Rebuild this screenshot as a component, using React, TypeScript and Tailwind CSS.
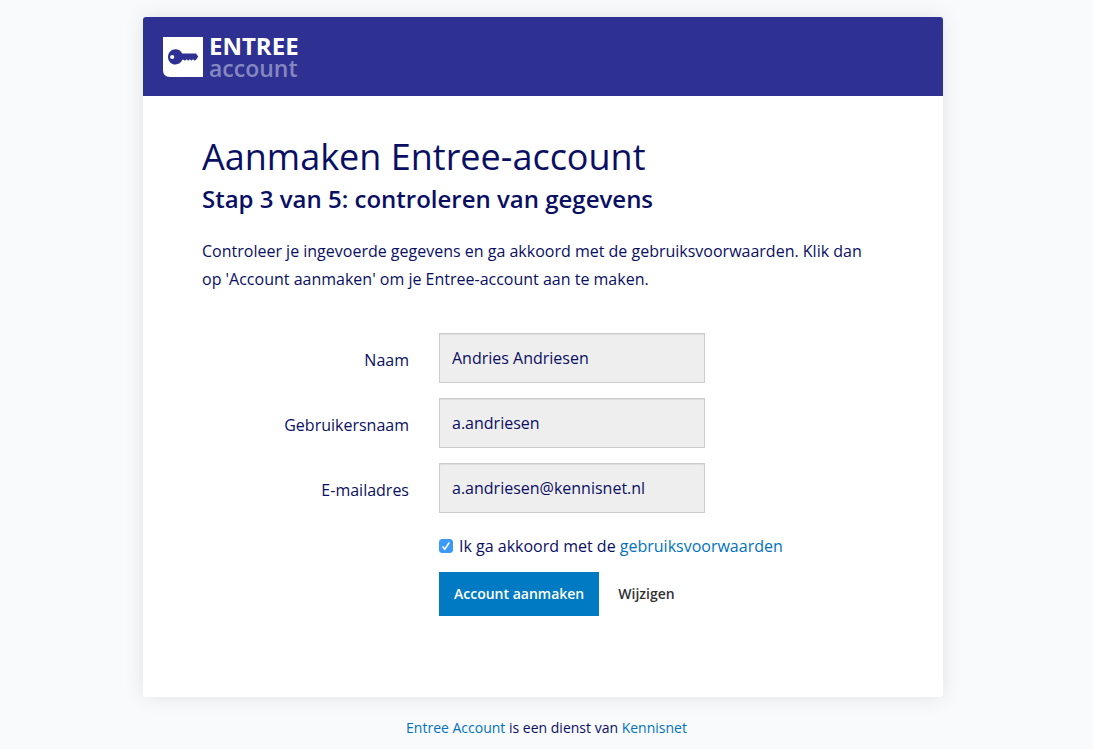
import React, { useState } from 'react';

interface Field {
  id: string;
  label: string;
  value: string;
}

const fields: Field[] = [
  { id: 'naam', label: 'Naam', value: 'Andries Andriesen' },
  { id: 'gebruikersnaam', label: 'Gebruikersnaam', value: 'a.andriesen' },
  { id: 'email', label: 'E-mailadres', value: 'a.andriesen@kennisnet.nl' }
];

const Logo: React.FC = () => (
  <a href="#" className="flex items-center gap-1.5">
    <svg viewBox="0 0 40 40" className="w-10 h-10" aria-hidden="true">
      <path d="M0 0H40V40H7Q0 40 0 33Z" fill="#fff" />
      <path
        fillRule="evenodd"
        fill="#2e3192"
        d="M12.5 12.200C15.500 12.200 18 13.800 19.200 16.400H33L35.200 19.400L33.500 22.300L31.800 23.800L30 22.300L28.500 23.800L26.800 22.300L25.200 23.800L23.600 22.300L22 23.800L20.500 22.800H19.300C18.200 25.600 15.600 27.500 12.500 27.500C8.300 27.500 5 24.100 5 19.900C5 15.600 8.300 12.200 12.500 12.200ZM9.200 17.900A2.100 2.100 0 1 0 9.200 22.100A2.100 2.100 0 0 0 9.200 17.900Z"
      />
    </svg>
    <span className="flex flex-col text-2xl leading-[22px]">
      <span className="font-bold text-white">ENTREE</span>
      <span className="text-[23px] font-semibold text-[#8587c0]">account</span>
    </span>
  </a>
);

const ReadonlyField: React.FC<{ field: Field }> = ({ field }) => (
  <div className="flex items-center gap-[30px]">
    <label htmlFor={field.id} className="w-[207px] pt-1 text-right">
      {field.label}
    </label>
    <input
      id={field.id}
      type="text"
      readOnly
      value={field.value}
      className="w-[266px] h-[50px] px-3 border border-[#ccc] bg-[#eee] shadow-[inset_0_1px_1px_rgba(0,0,0,0.075)] outline-none"
    />
  </div>
);

export default function App() {
  const [accepted, setAccepted] = useState(true);

  return (
    <div className="min-h-screen bg-[#f9fafc] pt-[17px] font-['Open_Sans','Noto_Sans',sans-serif] text-base text-[#0a0f64]">
      <div className="pr-[7px]">
        <main className="max-w-[800px] mx-auto rounded-[3px] bg-white shadow-[0_0_20px_rgba(0,0,0,0.1)]">
          <header className="flex items-center h-[79px] px-5 rounded-t-[3px] bg-[#2e3192]">
            <Logo />
          </header>

          <div className="px-[59px] pt-[38px] pb-[81px]">
            <h1 className="text-4xl leading-[46px]">Aanmaken Entree-account</h1>
            <h2 className="mt-1 text-2xl leading-[30px] font-semibold">Stap 3 van 5: controleren van gegevens</h2>
            <p className="mt-[23px] leading-7">
              Controleer je ingevoerde gegevens en ga akkoord met de gebruiksvoorwaarden. Klik dan op 'Account aanmaken' om je Entree-account aan te maken.
            </p>

            <form className="mt-10" onSubmit={(e) => e.preventDefault()}>
              <div className="flex flex-col gap-[15px]">
                {fields.map((field) => (
                  <ReadonlyField key={field.id} field={field} />
                ))}
              </div>

              <div className="ml-[237px]">
                <div className="flex items-center mt-[19px] leading-7">
                  <span className="relative mr-1.5 flex">
                    <input
                      id="akkoord"
                      type="checkbox"
                      checked={accepted}
                      onChange={(e) => setAccepted(e.target.checked)}
                      className="peer w-3.5 h-3.5 appearance-none rounded-[3px] border border-gray-400 bg-white checked:border-[#3b99fc] checked:bg-[#3b99fc]"
                    />
                    <svg viewBox="0 0 14 14" className="absolute inset-0 hidden pointer-events-none peer-checked:block" aria-hidden="true">
                      <path d="M3.500 7.500L5.800 10.200L10.300 3.500" fill="none" stroke="#fff" strokeWidth="1.600" />
                    </svg>
                  </span>
                  <label htmlFor="akkoord" className="whitespace-pre">Ik ga akkoord met de </label>
                  <a href="#" className="text-[#0072c0]">gebruiksvoorwaarden</a>
                </div>

                <div className="flex items-center mt-3 text-sm font-semibold">
                  <button type="submit" className="h-11 px-[15px] bg-[#007ac3] text-white">
                    Account aanmaken
                  </button>
                  <button type="button" className="h-11 px-[19px] text-[#333]">
                    Wijzigen
                  </button>
                </div>
              </div>
            </form>
          </div>
        </main>
      </div>

      <footer className="pt-[21px] text-center text-sm">
        <a href="#" className="text-[#0072c0]">Entree Account</a> is een dienst van{' '}
        <a href="#" className="text-[#0072c0]">Kennisnet</a>
      </footer>
    </div>
  );
}
